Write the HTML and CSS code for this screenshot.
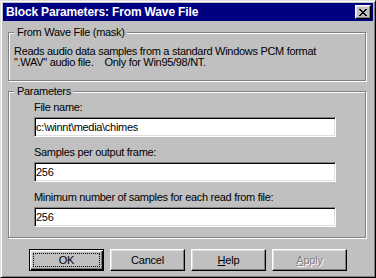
FILE: index.html
```html
<!DOCTYPE html>
<html>
<head>
    <title>Block Parameters: From Wave File</title>
    <link rel="stylesheet" href="styles.css">
</head>
<body>
    <div class="window">
        <div class="titlebar">
            <span class="title">Block Parameters: From Wave File</span>
            <span class="close-btn">
                <svg width="8" height="7" viewBox="0 0 8 7" shape-rendering="crispEdges">
                    <path d="M0 0h2v1H0z M6 0h2v1H6z M1 1h2v1H1z M5 1h2v1H5z M2 2h4v1H2z M3 3h2v1H3z M2 4h4v1H2z M1 5h2v1H1z M5 5h2v1H5z M0 6h2v1H0z M6 6h2v1H6z" fill="#000"/>
                </svg>
            </span>
        </div>
        <div class="dialog-body">
            <fieldset class="group mask-group">
                <legend>From Wave File (mask)</legend>
                <p class="desc">Reads audio data samples from a standard Windows PCM format<br>".WAV" audio file.&nbsp;&nbsp;&nbsp; Only for Win95/98/NT.</p>
            </fieldset>
            <fieldset class="group params-group">
                <legend>Parameters</legend>
                <div class="fields">
                    <label class="field-label" for="file-name">File name:</label>
                    <input class="field" id="file-name" type="text" value="c:\winnt\media\chimes">
                    <label class="field-label" for="frame-size">Samples per output frame:</label>
                    <input class="field" id="frame-size" type="text" value="256">
                    <label class="field-label" for="read-size">Minimum number of samples for each read from file:</label>
                    <input class="field" id="read-size" type="text" value="256">
                </div>
            </fieldset>
            <div class="buttons">
                <button class="btn default"><span class="focus">OK</span></button>
                <button class="btn">Cancel</button>
                <button class="btn"><span><u>H</u>elp</span></button>
                <button class="btn disabled"><span><u>A</u>pply</span></button>
            </div>
        </div>
    </div>
</body>
</html>
```

FILE: styles.css
```css
body {
    margin: 0;
    padding: 0;
    font-family: "Liberation Sans", Arial, sans-serif;
    font-size: 11px;
    color: #000;
    background: #c0c0c0;
}
.window {
    width: 376px;
    height: 278px;
    box-sizing: border-box;
    background: #c0c0c0;
    border: 1px solid;
    border-color: #dfdfdf #000 #000 #dfdfdf;
    box-shadow: inset 1px 1px 0 #fff, inset -1px -1px 0 #808080;
    padding: 2px;
}
.titlebar {
    height: 18px;
    background: #000080;
    display: flex;
    align-items: center;
    justify-content: space-between;
    padding: 0 2px 0 3px;
}
.title {
    color: #fff;
    font-weight: bold;
    font-size: 12px;
    letter-spacing: -0.15px;
    line-height: 18px;
}
.close-btn {
    width: 16px;
    height: 14px;
    box-sizing: border-box;
    background: #c0c0c0;
    border: 1px solid;
    border-color: #fff #000 #000 #fff;
    box-shadow: inset -1px -1px 0 #808080, inset 1px 1px 0 #dfdfdf;
    display: flex;
    align-items: center;
    justify-content: center;
}
.close-btn svg {
    display: block;
}
.dialog-body {
    padding-top: 5px;
}
.group {
    margin: 0 7px 0 5px;
    border: 1px solid #808080;
    box-shadow: inset 1px 1px 0 #fff, 1px 1px 0 #fff;
    min-width: 0;
}
.group legend {
    padding: 0 2px 0 3px;
    line-height: 13px;
    letter-spacing: -0.3px;
    background: #c0c0c0;
}
.mask-group {
    padding: 7px 5px 12px 5px;
}
.desc {
    margin: 0;
    line-height: 11px;
    letter-spacing: -0.3px;
    white-space: nowrap;
}
.params-group {
    margin-top: 4px;
    padding: 3px 5px 10px 5px;
}
.fields {
    padding-left: 20px;
}
.field-label {
    display: block;
    line-height: 13px;
    letter-spacing: -0.3px;
    margin-bottom: 3px;
}
.field {
    display: block;
    width: 302px;
    height: 20px;
    box-sizing: border-box;
    margin: 0 0 9px 0;
    padding: 0 1px;
    font: inherit;
    letter-spacing: -0.3px;
    line-height: 16px;
    background: #fff;
    border: 1px solid;
    border-color: #808080 #fff #fff #808080;
    box-shadow: inset 1px 1px 0 #000, inset -1px -1px 0 #dfdfdf;
    outline: none;
}
.field:last-child {
    margin-bottom: 0;
}
.buttons {
    display: flex;
    justify-content: center;
    gap: 6px;
    margin-top: 11px;
}
.btn {
    width: 75px;
    height: 22px;
    box-sizing: border-box;
    padding: 0;
    font: inherit;
    letter-spacing: -0.2px;
    color: #000;
    background: #c0c0c0;
    border: 1px solid;
    border-color: #fff #000 #000 #fff;
    box-shadow: inset -1px -1px 0 #808080, inset 1px 1px 0 #dfdfdf;
    display: flex;
    align-items: center;
    justify-content: center;
}
.btn.default {
    border-color: #000;
    padding: 3px;
    box-shadow: inset 1px 1px 0 #fff, inset -1px -1px 0 #000, inset -2px -2px 0 #808080, inset 2px 2px 0 #dfdfdf;
}
.focus {
    width: 100%;
    height: 100%;
    box-sizing: border-box;
    border: 1px dotted #000;
    display: flex;
    align-items: center;
    justify-content: center;
}
.btn.disabled {
    color: #808080;
    text-shadow: 1px 1px 0 #fff;
}
```
